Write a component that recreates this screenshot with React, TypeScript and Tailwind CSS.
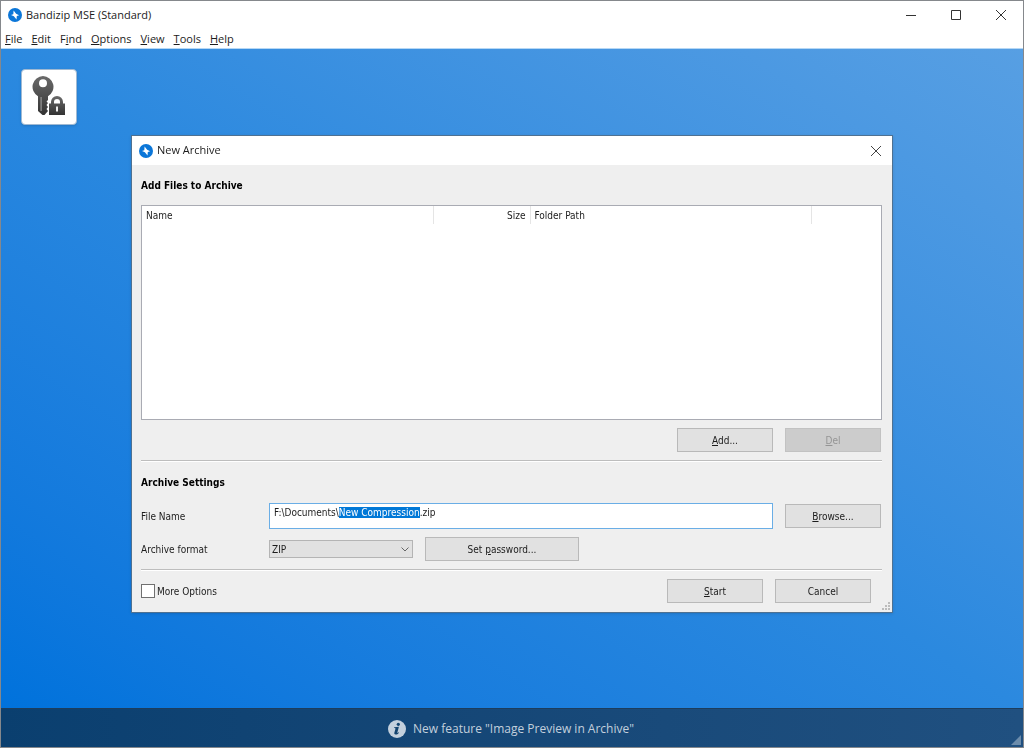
import { useEffect, useRef, useState } from 'react'
import type { ReactNode } from 'react'

const MENU = ['File', 'Edit', 'Find', 'Options', 'View', 'Tools', 'Help']

// Menu entries whose access key is not the first letter
const ACCESS_KEYS: Record<string, number> = { Find: 1 }

export default function App() {
  return (
    <div className="min-h-screen flex flex-col border border-[#85888c] bg-white font-['Open_Sans',sans-serif] text-[11px] text-[#1c1c1c]">
      <TitleBar />
      <MenuBar />
      <main className="flex-1 bg-linear-to-tr from-[#0072dc] via-[#2b89df] to-[#579fe3] p-5 border-t border-[#b5d7f5]">
        <button
          type="button"
          aria-label="Password Manager"
          className="size-14 rounded bg-white border border-[#9fb9d3] shadow flex items-center justify-center"
        >
          <KeyLockIcon />
        </button>
      </main>
      <StatusBar />
      <NewArchiveDialog />
    </div>
  )
}

function TitleBar() {
  return (
    <header className="flex items-center h-7 pl-[7px] bg-white">
      <BandizipLogo />
      <h1 className="ml-1 flex-1">Bandizip MSE (Standard)</h1>
      <div className="flex">
        <CaptionButton label="Minimize">
          <path d="M0 5.5h10" />
        </CaptionButton>
        <CaptionButton label="Maximize">
          <path d="M.5.5h9v9h-9z" />
        </CaptionButton>
        <CaptionButton label="Close">
          <path d="M0 0l10 10M10 0L0 10" />
        </CaptionButton>
      </div>
    </header>
  )
}

function CaptionButton({ label, children }: { label: string; children: ReactNode }) {
  return (
    <button
      type="button"
      aria-label={label}
      className="w-[45px] h-7 flex items-center justify-center hover:bg-[#e5e5e5]"
    >
      <svg viewBox="0 0 10 10" className="size-[10px] overflow-visible" fill="none" stroke="#333" strokeWidth="1">
        {children}
      </svg>
    </button>
  )
}

function MenuBar() {
  return (
    <nav className="flex items-center h-[19px] pt-0.5 pl-1 gap-[9px] bg-white">
      {MENU.map((item) => (
        <button key={item} type="button" className="hover:bg-[#e5f3ff]">
          <AccessLabel text={item} index={ACCESS_KEYS[item] ?? 0} />
        </button>
      ))}
    </nav>
  )
}

function AccessLabel({ text, index = 0 }: { text: string; index?: number }) {
  return (
    <>
      {text.slice(0, index)}
      <u>{text[index]}</u>
      {text.slice(index + 1)}
    </>
  )
}

function StatusBar() {
  return (
    <footer className="relative h-[39px] pt-px pr-0.5 flex items-center justify-center gap-[7px] border-t border-[#1d3d5c] bg-linear-to-r from-[#0a3f6f] to-[#205080] text-xs text-[#c3d0dd]">
      <svg viewBox="0 0 18 18" className="size-[18px]">
        <circle cx="9" cy="9" r="9" fill="#c3d0dd" />
        <circle cx="10.3" cy="4.3" r="1.6" fill="#14446f" />
        <path d="M6.2 7.3l4.7-.6-1.5 5.6c-.2.8.3.8 1.3-.1l.4.5c-1.2 1.4-2.4 2-3.5 1.9-1.1-.1-1.5-.9-1.2-2l1-3.7c.2-.8-.1-.9-1.3-1z" fill="#14446f" />
      </svg>
      <a href="#image-preview">New feature "Image Preview in Archive"</a>
      <svg viewBox="0 0 10 10" className="absolute right-0.5 bottom-0.5 size-[10px]">
        <path d="M10 0v10H0z" fill="#6c8cab" />
      </svg>
    </footer>
  )
}

function NewArchiveDialog() {
  const fileRef = useRef<HTMLInputElement>(null)
  const [fileName, setFileName] = useState('F:\\Documents\\New Compression.zip')
  const [format, setFormat] = useState('ZIP')
  const [more, setMore] = useState(false)

  // Preselect the base name so typing replaces it and keeps the extension
  useEffect(() => {
    const input = fileRef.current
    if (!input) return
    const start = input.value.lastIndexOf('\\') + 1
    const end = input.value.lastIndexOf('.')
    input.focus()
    input.setSelectionRange(start, end)
  }, [])

  return (
    <div className="fixed inset-0 flex items-center justify-center">
      <div
        role="dialog"
        aria-labelledby="dialog-title"
        className="relative w-full max-w-[762px] border border-[#4f7191] bg-[#efefef] font-['DejaVu_Sans_Condensed','DejaVu_Sans',sans-serif] text-[10px] text-[#1c1c1c] shadow-sm"
      >
        <div className="flex items-center h-[29px] pl-[7px] bg-white font-['Open_Sans',sans-serif] text-[11px]">
          <BandizipLogo />
          <h2 id="dialog-title" className="ml-1 flex-1">New Archive</h2>
          <button type="button" aria-label="Close" className="w-8 h-7 flex items-center justify-center">
            <svg viewBox="0 0 10 10" className="size-[10px]" fill="none" stroke="#444" strokeWidth="1">
              <path d="M0 0l10 10M10 0L0 10" />
            </svg>
          </button>
        </div>

        <div className="pl-[9px] pr-[10px] pb-[9px]">
          <h3 className="h-10 flex items-center font-bold text-black">Add Files to Archive</h3>
          <div className="h-[215px] border border-[#a9abb3] bg-white">
            <table className="w-full table-fixed border-collapse">
              <thead>
                <tr className="h-[18px] text-left">
                  <th className="w-[291px] pl-1 font-normal border-r border-[#e5e5e5]">Name</th>
                  <th className="w-[97px] pr-1 font-normal text-right border-r border-[#e5e5e5]">Size</th>
                  <th className="w-[281px] pl-1 font-normal border-r border-[#e5e5e5]">Folder Path</th>
                  <td />
                </tr>
              </thead>
              <tbody />
            </table>
          </div>
          <div className="flex justify-end gap-3 py-2 pr-px">
            <DialogButton text="Add..." />
            <DialogButton text="Del" disabled />
          </div>
          <Divider />

          <h3 className="h-[41px] flex items-center font-bold text-black">Archive Settings</h3>
          <div className="flex items-center pr-px">
            <label htmlFor="file-name" className="w-32">File Name</label>
            <input
              id="file-name"
              ref={fileRef}
              value={fileName}
              onChange={(e) => setFileName(e.target.value)}
              className="flex-1 h-[26px] px-1 pb-2 mr-3 border border-[#6aaee6] bg-white outline-none selection:bg-[#0078d7] selection:text-white"
            />
            <DialogButton text="Browse..." />
          </div>
          <div className="flex items-center mt-2">
            <label htmlFor="archive-format" className="w-32">Archive format</label>
            <div className="grid w-36 mr-3">
              <select
                id="archive-format"
                value={format}
                onChange={(e) => setFormat(e.target.value)}
                className="col-start-1 row-start-1 h-[18px] pl-0.5 appearance-none border border-[#b4b4b4] bg-[#e1e1e1]"
              >
                <option>ZIP</option>
                <option>ZIPX</option>
                <option>TAR</option>
                <option>7Z</option>
              </select>
              <svg
                viewBox="0 0 8 5"
                className="col-start-1 row-start-1 self-center justify-self-end mr-1 w-2 h-[5px] pointer-events-none"
                fill="none"
                stroke="#666"
              >
                <path d="M.5.5L4 4 7.5.5" />
              </svg>
            </div>
            <DialogButton text="Set password..." accessIndex={4} wide />
          </div>
          <div className="mt-2">
            <Divider />
          </div>
          <div className="flex items-center gap-3 pt-2 pr-[11px]">
            <label className="flex-1 flex items-center gap-0.5">
              <input
                type="checkbox"
                checked={more}
                onChange={(e) => setMore(e.target.checked)}
                className="size-[14px] appearance-none border border-[#707070] bg-white checked:bg-[#0078d7]"
              />
              More Options
            </label>
            <DialogButton text="Start" />
            <DialogButton text="Cancel" accessIndex={-1} />
          </div>
        </div>
        <SizeGrip />
      </div>
    </div>
  )
}

type DialogButtonProps = {
  text: string
  accessIndex?: number
  disabled?: boolean
  wide?: boolean
}

function DialogButton({ text, accessIndex = 0, disabled, wide }: DialogButtonProps) {
  return (
    <button
      type="button"
      disabled={disabled}
      className={`h-6 border ${wide ? 'w-[154px]' : 'w-24'} ${
        disabled
          ? 'bg-[#cccccc] border-[#c2c2c2] text-[#949494]'
          : 'bg-[#e1e1e1] border-[#b9b9b9] hover:bg-[#e5f1fb]'
      }`}
    >
      {accessIndex < 0 ? text : <AccessLabel text={text} index={accessIndex} />}
    </button>
  )
}

function Divider() {
  return <div className="h-0.5 bg-[#bdbdbd] border-b border-white" />
}

function SizeGrip() {
  return (
    <svg viewBox="0 0 8 8" className="absolute right-0.5 bottom-0.5 size-2" fill="#bcbcbc">
      <path d="M6 0h2v2H6zM3 3h2v2H3zM6 3h2v2H6zM0 6h2v2H0zM3 6h2v2H3zM6 6h2v2H6z" />
    </svg>
  )
}

function BandizipLogo() {
  return (
    <svg viewBox="0 0 14 14" className="size-[14px]">
      <circle cx="7" cy="7" r="7" fill="#0b76d8" />
      <path d="M5.6 2.6l2.5 3.1 3 1.5-2.3.7-.3 3.6-2.6-3.2L3 6.900l2.300-.7z" fill="#fff" />
    </svg>
  )
}

function KeyLockIcon() {
  return (
    <svg viewBox="0 0 36 40" className="w-9 h-10 mb-0.5">
      <defs>
        <linearGradient id="metal" x1="0" y1="0" x2="0" y2="1">
          <stop offset="0" stopColor="#6a6a6a" />
          <stop offset="1" stopColor="#333" />
        </linearGradient>
      </defs>
      <path
        fill="url(#metal)"
        fillRule="evenodd"
        d="M12 0a10.8 10.8 0 0 1 5 20.2V24l-1.500 1.500L17 27l-1.500 2 1.500 2-1.500 2 1.500 2-3.500 4h-2L7 35V20.200A10.800 10.800 0 0 1 12 0zm0 3.300a4 4 0 1 0 0 8 4 4 0 0 0 0-8z"
      />
      <path fill="#999" d="M9.500 21h1.200v14H9.500z" />
      <path
        fill="url(#metal)"
        d="M18 27.500h2V26a6 6 0 0 1 12 0v1.500h2V39H18zm5 0h6V26a3 3 0 0 0-6 0z"
      />
      <path fill="#eee" d="M25 30.500h2v5h-2z" />
    </svg>
  )
}
